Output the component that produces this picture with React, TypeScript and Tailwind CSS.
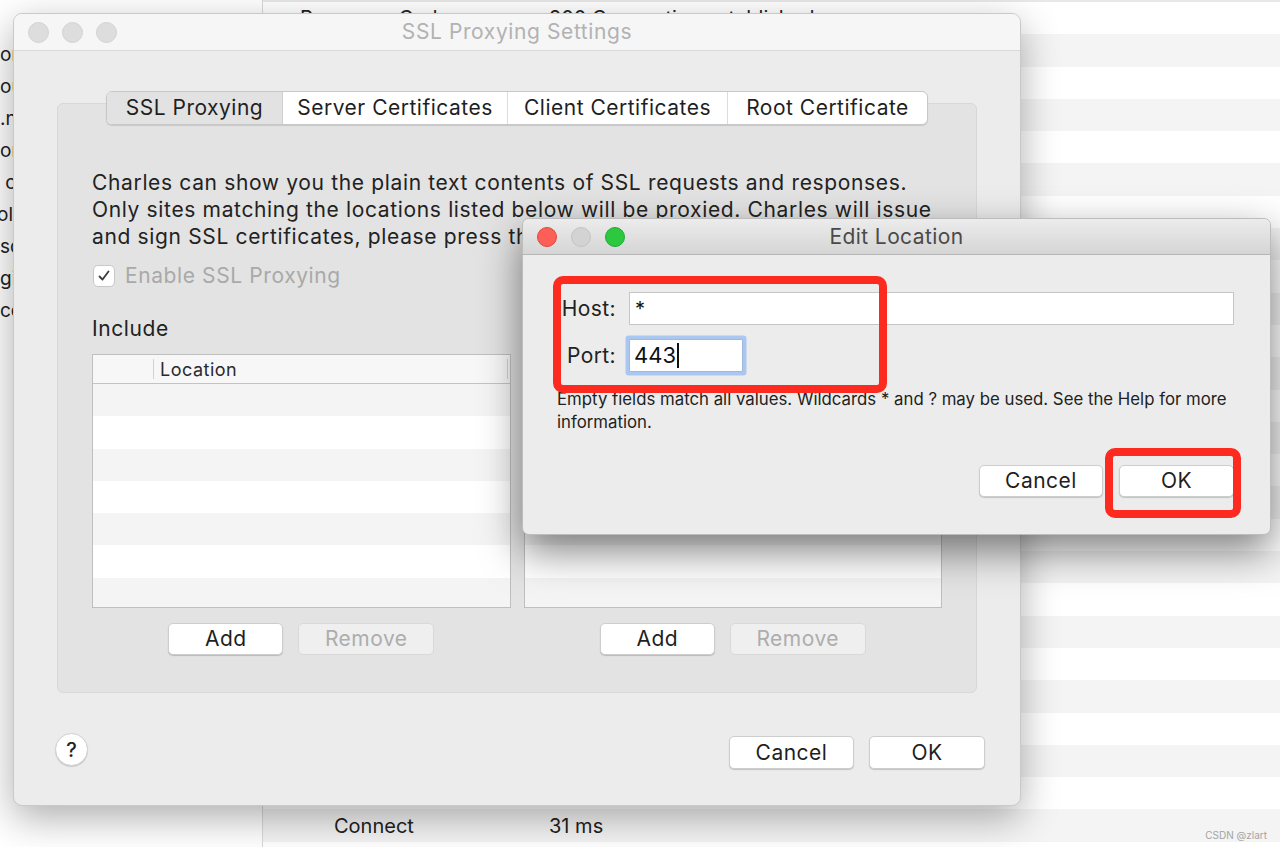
import React from "react";

const sidebarRows = ["on", "ou", ".n", "or", "\u00a0c", "ol", "sd", "gi", "cc"];

function Lights({ active }: { active: boolean }) {
  if (!active) {
    return (
      <div className="flex gap-[13px] pl-[14px]">
        <span className="w-[21px] h-[21px] rounded-full bg-[#dddddd] border border-[#d2d2d2]" />
        <span className="w-[21px] h-[21px] rounded-full bg-[#dddddd] border border-[#d2d2d2]" />
        <span className="w-[21px] h-[21px] rounded-full bg-[#dddddd] border border-[#d2d2d2]" />
      </div>
    );
  }
  return (
    <div className="flex gap-[14px] pl-[14px]">
      <span className="w-[20px] h-[20px] rounded-full bg-[#fc5f57] border border-[#e2463f]" />
      <span className="w-[20px] h-[20px] rounded-full bg-[#d3d3d3] border border-[#c4c4c4]" />
      <span className="w-[20px] h-[20px] rounded-full bg-[#2bc840] border border-[#1faa32]" />
    </div>
  );
}

function Btn({
  label,
  w,
  disabled,
  h = "h-[32px]",
}: {
  label: string;
  w: string;
  disabled?: boolean;
  h?: string;
}) {
  return (
    <div
      className={
        disabled
          ? `${w} ${h} rounded-[5px] bg-[#efefef] border border-[#d9d9d9] flex items-center justify-center text-[21px] tracking-[0.5px] text-[#adadad]`
          : `${w} ${h} rounded-[5px] bg-white border border-[#cdcdcd] shadow-[0_1px_1px_rgba(0,0,0,0.18)] flex items-center justify-center text-[21px] tracking-[0.5px] text-[#1f1f1f]`
      }
    >
      {label}
    </div>
  );
}

function Table() {
  const rows = [0, 1, 2, 3, 4, 5, 6];
  return (
    <div className="mt-[13px] h-[254px] border border-[#bfbfbf] bg-white flex flex-col overflow-hidden">
      <div className="h-[29px] shrink-0 bg-[#f7f7f7] border-b border-[#c4c4c4] flex items-center">
        <div className="w-[60px]" />
        <div className="w-px h-[20px] bg-[#d3d3d3]" />
        <div className="flex-1 pl-[6px] text-[18px] tracking-[0.5px] text-[#2a2a2a]">Location</div>
        <div className="w-px h-[20px] bg-[#d3d3d3] mr-[2px]" />
      </div>
      {rows.map((r) => (
        <div
          key={r}
          className={r % 2 === 0 ? "h-[32.3px] shrink-0 bg-[#f4f4f4]" : "h-[32.3px] shrink-0 bg-white"}
        />
      ))}
    </div>
  );
}

function Column({ label }: { label: string }) {
  return (
    <div className="flex flex-col">
      <div className="h-[24px] leading-[24px] text-[21px] tracking-[0.6px] text-[#222]">{label}</div>
      <Table />
      <div className="mt-[15px] flex justify-center gap-[15px]">
        <Btn label="Add" w="w-[115px]" />
        <Btn label="Remove" w="w-[136px]" disabled />
      </div>
    </div>
  );
}

export default function App() {
  const stripes = Array.from({ length: 27 }, (_, i) => i);
  return (
    <div className="relative w-[1280px] h-[847px] overflow-hidden bg-white font-['Inter'] text-[#222]">
      {/* background application */}
      <div className="flex h-full">
        <aside className="w-[263px] shrink-0 border-r border-[#d9d9d9] bg-white pt-[39px]">
          {sidebarRows.map((t, i) => (
            <div
              key={i}
              className={
                i === 5
                  ? "h-[32px] leading-[32px] text-[19px] -ml-[3px] whitespace-pre"
                  : "h-[32px] leading-[32px] text-[19px] whitespace-pre"
              }
            >
              {t}
            </div>
          ))}
        </aside>
        <main className="flex-1 flex flex-col">
          <div className="h-[2px] shrink-0 bg-[#e8e8e8]" />
          {stripes.map((i) => (
            <div
              key={i}
              className={
                (i % 2 === 1 ? "bg-[#f4f4f4] " : "bg-white ") +
                "h-[32.3px] shrink-0 flex items-center text-[20px] text-[#222]"
              }
            >
              {i === 0 && (
                <>
                  <span className="pl-[37px] w-[286px]">Response Code</span>
                  <span>200 Connection established</span>
                </>
              )}
              {i === 25 && (
                <>
                  <span className="pl-[71px] w-[286px]">Connect</span>
                  <span>31 ms</span>
                </>
              )}
            </div>
          ))}
        </main>
      </div>

      {/* SSL Proxying Settings window */}
      <div className="absolute left-[13px] top-[13px] w-[1008px] h-[793px] rounded-[9px] bg-[#ececec] border border-[#c9c9c9] shadow-[0_12px_38px_rgba(0,0,0,0.32)] flex flex-col overflow-hidden">
        <div className="h-[37px] shrink-0 bg-[#f6f6f6] border-b border-[#d8d8d8] grid grid-cols-[1fr_auto_1fr] items-center">
          <Lights active={false} />
          <span className="text-[21px] tracking-[0.6px] text-[#b2b2b2]">SSL Proxying Settings</span>
          <span />
        </div>

        <div className="px-[43px] pt-[52px]">
          <div className="h-[590px] rounded-[6px] bg-[#e3e3e3] border border-[#d8d8d8] flex flex-col">
            {/* segmented tabs */}
            <div className="-mt-[13px] self-center flex h-[34px] rounded-[6px] border border-[#c7c7c7] shadow-[0_1px_1px_rgba(0,0,0,0.12)] overflow-hidden bg-white text-[21px] tracking-[0.5px] text-[#1f1f1f]">
              <div className="w-[176px] flex items-center justify-center bg-[#e2e2e2] border-r border-[#cfcfcf]">SSL Proxying</div>
              <div className="w-[225px] flex items-center justify-center border-r border-[#dcdcdc]">Server Certificates</div>
              <div className="w-[220px] flex items-center justify-center border-r border-[#dcdcdc]">Client Certificates</div>
              <div className="w-[199px] flex items-center justify-center">Root Certificate</div>
            </div>

            <div className="px-[34px]">
              <p className="mt-[44px] text-[21px] tracking-[0.65px] leading-[27px] text-[#222] whitespace-nowrap">
                Charles can show you the plain text contents of SSL requests and responses.
                <br />
                Only sites matching the locations listed below will be proxied. Charles will issue
                <br />
                and sign SSL certificates, please press the Help button for more information.
              </p>

              <div className="mt-[14px] h-[24px] flex items-center">
                <div className="w-[22px] h-[22px] rounded-[5px] bg-white border border-[#c8c8c8] flex items-center justify-center ml-[1px]">
                  <svg width="16" height="16" viewBox="0 0 16 16">
                    <path d="M3.5 8.5 L6.5 11.5 L12.5 3.5" fill="none" stroke="#3a3a3a" strokeWidth="1.8" strokeLinecap="round" strokeLinejoin="round" />
                  </svg>
                </div>
                <span className="ml-[10px] text-[21px] tracking-[0.6px] text-[#a9a9a9]">Enable SSL Proxying</span>
              </div>

              <div className="mt-[29px] grid grid-cols-2 gap-x-[13px]">
                <Column label="Include" />
                <Column label="Exclude" />
              </div>
            </div>
          </div>
        </div>

        <div className="mt-[40px] pl-[41px] pr-[35px] flex justify-between items-start">
          <div className="w-[33px] h-[33px] rounded-full bg-white border border-[#d0d0d0] shadow-[0_1px_1px_rgba(0,0,0,0.15)] flex items-center justify-center text-[20px] font-medium text-[#222]">
            ?
          </div>
          <div className="mt-[3px] flex gap-[15px]">
            <Btn label="Cancel" w="w-[125px]" h="h-[33px]" />
            <Btn label="OK" w="w-[116px]" h="h-[33px]" />
          </div>
        </div>
      </div>

      {/* Edit Location dialog */}
      <div className="absolute left-[522px] top-[218px] w-[749px] h-[317px] rounded-[7px] bg-[#ececec] border border-[#bcbcbc] shadow-[0_16px_40px_rgba(0,0,0,0.5)] flex flex-col overflow-hidden">
        <div className="h-[36px] shrink-0 bg-gradient-to-b from-[#ececec] to-[#d5d5d5] border-b border-[#b6b6b6] grid grid-cols-[1fr_auto_1fr] items-center">
          <Lights active />
          <span className="text-[21px] tracking-[0.4px] text-[#4a4a4a]">Edit Location</span>
          <span />
        </div>
        <div className="pl-[34px] pr-[36px] pt-[37px] flex flex-col">
          <div className="flex items-center h-[33px]">
            <span className="w-[59px] text-right text-[21px] tracking-[0.4px] text-[#222]">Host:</span>
            <div className="ml-[13px] flex-1 h-[33px] bg-white border border-[#c6c6c6] flex items-center pl-[5px] text-[20px] text-[#111]">
              *
            </div>
          </div>
          <div className="mt-[14px] flex items-center h-[33px]">
            <span className="w-[59px] text-right text-[21px] tracking-[0.4px] text-[#222]">Port:</span>
            <div className="ml-[13px] w-[114px] h-[33px] bg-white border border-[#9fb9dd] shadow-[0_0_0_3.5px_#a9c7f1] rounded-[1px] flex items-center pl-[4px] text-[22px] text-[#111]">
              443
              <span className="ml-[1px] w-[1.5px] h-[25px] bg-[#111]" />
            </div>
          </div>
          <p className="mt-[16px] text-[16.8px] leading-[23px] text-[#222] whitespace-nowrap">
            Empty fields match all values. Wildcards * and ? may be used. See the Help for more
            <br />
            information.
          </p>
          <div className="mt-[31px] flex justify-end gap-[16px]">
            <Btn label="Cancel" w="w-[124px]" />
            <Btn label="OK" w="w-[115px]" />
          </div>
        </div>
      </div>

      {/* red annotation frames */}
      <div className="absolute left-[553px] top-[276px] w-[334px] h-[117px] border-[8px] border-[#fc2a1f] rounded-[10px] pointer-events-none" />
      <div className="absolute left-[1105px] top-[448px] w-[136px] h-[70px] border-[8px] border-[#fc2a1f] rounded-[10px] pointer-events-none" />

      {/* watermark */}
      <div className="absolute right-[13px] bottom-[6px] text-[10px] leading-[12px] text-[#a3a3a3]">CSDN @zlart</div>
    </div>
  );
}
